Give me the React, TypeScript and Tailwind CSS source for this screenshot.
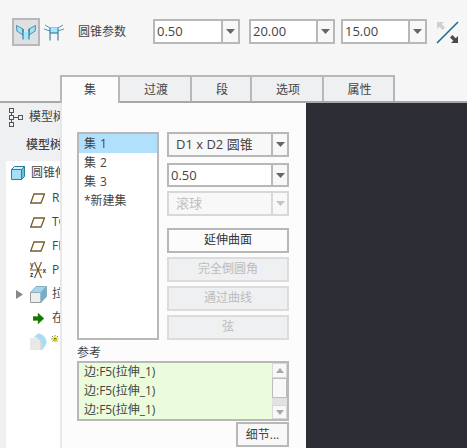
const font = { fontFamily: '"Open Sans","Noto Sans CJK SC",sans-serif' };

function Arrow({ disabled }: { disabled?: boolean }) {
  return (
    <svg width="9" height="5" viewBox="0 0 9 5">
      <path d="M0 0H9L4.5 5Z" fill={disabled ? "#c4c4c4" : "#666666"} />
    </svg>
  );
}

function Combo({ value, w, h = 25, white = true, disabled, center, box = 17 }: { value: string; w: number | string; h?: number; white?: boolean; disabled?: boolean; center?: boolean; box?: number }) {
  return (
    <div
      style={{ width: w, height: h }}
      className={`flex border-2 ${disabled ? "border-[#d8d8d8] bg-[#f8f8f8] text-[#c0c0c0]" : "border-[#b8b8b8] text-[#444444]"} ${white ? "bg-white" : disabled ? "" : "bg-[#f8f8f8]"}`}
    >
      <div className={`flex-1 flex items-center text-[13px] leading-none whitespace-nowrap ${center ? "pl-[7px]" : "pl-[2px]"}`}>{value}</div>
      <div style={{ width: box }} className={`flex items-center justify-center border-l-2 bg-[#f8f8f8] ${disabled ? "border-[#d8d8d8]" : "border-[#b8b8b8]"}`}>
        <Arrow disabled={disabled} />
      </div>
    </div>
  );
}

function ToggleA() {
  return (
    <svg width="20" height="16" viewBox="0 0 20 16">
      <path d="M0.5 1.5L7 5V11L0.8 7Z" fill="#a5e0f5" stroke="#2a7f9f" strokeWidth="0.8" />
      <path d="M19.5 1.5L13 5V11L19.2 7Z" fill="#a5e0f5" stroke="#2a7f9f" strokeWidth="0.8" />
      <path d="M7 8H13V15.5H7Z" fill="#a8e4fb" />
      <path d="M7 5V15.5M13 5V15.5" stroke="#1d6f8f" strokeWidth="1" fill="none" />
    </svg>
  );
}

function ToggleB() {
  return (
    <svg width="20" height="17" viewBox="0 0 20 17">
      <path d="M1 1L6 4H14L19 1M0 5L6 7M20 5L14 7" stroke="#2a7f9f" strokeWidth="0.8" fill="none" />
      <path d="M6.5 4H13.5V9H6.5Z" fill="#a8e4fb" />
      <path d="M6 4V16.5M14 4V16.5M6 9H14" stroke="#1d6f8f" strokeWidth="1" fill="none" />
    </svg>
  );
}

function SwapIcon() {
  return (
    <svg width="23" height="23" viewBox="0 0 23 23">
      <path d="M1 22L22 1" stroke="#1d6b8c" strokeWidth="1.6" />
      <path d="M1 1H8L5.7 3.3L9 6.6L6.6 9L3.3 5.7L1 8Z" fill="#cfcfcf" />
      <path d="M22 22H15L17.3 19.7L14 16.4L16.4 14L19.7 17.3L22 15Z" fill="#4a4a4a" />
    </svg>
  );
}

function TreeHeadIcon() {
  return (
    <svg className="shrink-0" width="14" height="19" viewBox="0 0 14 19" fill="none" stroke="#555" strokeWidth="1">
      <rect x="0.5" y="0.5" width="4" height="4" />
      <rect x="0.5" y="7.5" width="4" height="4" />
      <rect x="0.5" y="14.5" width="4" height="4" />
      <rect x="9.5" y="7.5" width="4" height="4" />
      <path d="M2.5 4.5V7.5M2.5 11.5V14.5M4.5 9.5H9.5" />
    </svg>
  );
}

function CubeIcon() {
  return (
    <svg width="14" height="14" viewBox="0 0 14 14">
      <path d="M0.5 3.5H10.5V13.5H0.5Z" fill="#a5def5" stroke="#2c7fa0" />
      <path d="M0.5 3.5L3.5 0.5H13.5L10.5 3.5Z" fill="#d6f0fa" stroke="#2c7fa0" />
      <path d="M10.5 3.5L13.5 0.5V10.5L10.5 13.5Z" fill="#6fbcd9" stroke="#2c7fa0" />
    </svg>
  );
}

function PlaneIcon() {
  return (
    <svg width="15" height="11" viewBox="0 0 15 11">
      <path d="M4 1H14.5L11 10H0.7Z" fill="none" stroke="#7a5a28" strokeWidth="1.3" />
    </svg>
  );
}

function CsysIcon() {
  return (
    <svg width="17" height="18" viewBox="0 0 17 18">
      <path d="M4.5 1L11.5 17M11.5 1L4.5 17M0 9H12" stroke="#7a5a28" strokeWidth="1.2" fill="none" />
      <text x="0" y="6" fontSize="6.5" fontWeight="700" fill="#333" fontFamily="Liberation Sans">y</text>
      <text x="0" y="16" fontSize="6.5" fontWeight="700" fill="#333" fontFamily="Liberation Sans">z</text>
      <text x="12.5" y="11.5" fontSize="6.5" fontWeight="700" fill="#333" fontFamily="Liberation Sans">x</text>
    </svg>
  );
}

function ExtrudeIcon() {
  return (
    <svg width="17" height="17" viewBox="0 0 17 17">
      <path d="M0.5 6.5H11V16.5H0.5Z" fill="#eeeeee" stroke="#9a9a9a" />
      <path d="M0.5 6.5L6 0.5H16.5L11 6.5Z" fill="#a5d5ea" stroke="#8ab0c0" />
      <path d="M11 6.5L16.5 0.5V10.5L11 16.5Z" fill="#6fb0cf" stroke="#8ab0c0" />
    </svg>
  );
}

function InsertIcon() {
  return (
    <svg className="ml-[3px]" width="11" height="11" viewBox="0 0 11 11">
      <path d="M0 3.5H5V0L11 5.5L5 11V7.5H0Z" fill="#0b7a0b" stroke="#6a8f00" strokeWidth="0.5" />
    </svg>
  );
}

function RoundIcon() {
  return (
    <svg width="17" height="18" viewBox="0 0 17 18">
      <path d="M0 5H10V17H0Z" fill="#e8e8e8" />
      <path d="M8 0.5C12 0.5 16 4 16.5 9C16.5 11 14 15 12 17C12 10 10 5 4 4Z" fill="#a8dcf2" stroke="#cfe8f3" strokeWidth="0.5" />
      <path d="M10 5C11.5 8 12 12 12 17H10Z" fill="#d8d8d8" />
    </svg>
  );
}

function StarIcon() {
  return (
    <svg className="-mt-[7px] -ml-[1px] shrink-0" width="8" height="8" viewBox="0 0 8 8">
      <rect x="1.5" y="1.5" width="5" height="5" fill="#ffff33" />
      <path d="M4 0V8M0 4H8M1 1L7 7M7 1L1 7" stroke="#333" strokeWidth="0.6" strokeDasharray="1.4 1.2" />
    </svg>
  );
}

function Tab({ label, w, active }: { label: string; w: number; active?: boolean }) {
  return (
    <div
      style={{ width: w }}
      className={`h-[27px] flex items-center justify-center text-[12px] border-t-2 border-r-2 border-[#b8b8b8] text-[#444444] ${active ? "bg-[#fcfcfc] border-l-2 -mb-[2px] h-[28px] relative" : "bg-[#eef0f2] pl-[2px]"}`}
    >
      {label}
    </div>
  );
}

function ActionButton({ label, active }: { label: string; active?: boolean }) {
  return (
    <div
      className={`h-[25px] flex items-center justify-center text-[12px] border-2 ${active ? "bg-[#fcfcfc] border-[#b8b8b8] text-[#333333]" : "bg-[#eef0f2] border-[#dcdcdc] text-[#bcbcbc]"}`}
    >
      {label}
    </div>
  );
}

function TreeRow({ icon, label, indent, arrow, iconW = 22 }: { icon: React.ReactNode; label: React.ReactNode; indent: number; arrow?: boolean; iconW?: number }) {
  return (
    <div className="h-[24px] flex items-center relative whitespace-nowrap text-[12px] text-[#444444]" style={{ paddingLeft: indent }}>
      {arrow && (
        <svg className="absolute left-[10px] top-[8px]" width="7" height="9" viewBox="0 0 7 9">
          <path d="M0 0L7 4.5L0 9Z" fill="#888888" />
        </svg>
      )}
      <div style={{ width: iconW }} className="shrink-0 flex items-center">{icon}</div>
      {label}
    </div>
  );
}

export default function App() {
  return (
    <div style={font} className="w-[467px] h-[448px] overflow-hidden flex flex-col bg-[#f6f6f6]">
      <div className="h-[101px] shrink-0 flex flex-col">
        <div className="h-[75px] flex items-start pt-[19px] pl-[12px]">
          <div className="w-[28px] h-[28px] -mt-[1px] flex items-center justify-center bg-[#dfe0e2] border-2 border-[#b8b8b8]">
            <ToggleA />
          </div>
          <div className="ml-[4px] w-[20px] h-[26px] flex items-center"><ToggleB /></div>
          <div className="ml-[14px] w-[75px] h-[25px] flex items-center text-[12px] text-[#444444]">圆锥参数</div>
          <Combo value="0.50" w={87} />
          <div className="w-[9px]" />
          <Combo value="20.00" w={86} />
          <div className="w-[6px]" />
          <Combo value="15.00" w={86} />
          <div className="ml-[9px] mt-[2px]"><SwapIcon /></div>
        </div>
        <div className="h-[26px] flex pl-[60px]">
          <Tab label="集" w={60} active />
          <Tab label="过渡" w={72} />
          <Tab label="段" w={60} />
          <Tab label="选项" w={72} />
          <Tab label="属性" w={71} />
        </div>
      </div>
      <div className="flex-1 flex min-h-0 border-t-2 border-[#a8a8a8]">
        <div className="w-[60px] shrink-0 overflow-hidden bg-[#eef0f2] flex flex-col">
          <div className="h-[28px] flex items-center pl-[9px] gap-[6px] whitespace-nowrap text-[12px] text-[#444444]">
            <TreeHeadIcon />
            <span>模型树</span>
          </div>
          <div className="h-[28px] mb-[2px] flex items-center pl-[26px] whitespace-nowrap text-[12px] font-medium text-[#444444]">模型树</div>
          <div className="flex-1 ml-[6px] bg-white">
            <TreeRow indent={5} iconW={20} icon={<CubeIcon />} label={<span>圆锥伸出项</span>} />
            <div className="h-[1px]" />
            <TreeRow indent={24} icon={<PlaneIcon />} label={<span>RIGHT</span>} />
            <TreeRow indent={24} icon={<PlaneIcon />} label={<span>TOP</span>} />
            <TreeRow indent={24} icon={<PlaneIcon />} label={<span>FRONT</span>} />
            <TreeRow indent={24} icon={<CsysIcon />} label={<span>PRT_CSYS</span>} />
            <TreeRow indent={24} arrow icon={<ExtrudeIcon />} label={<span>拉伸 1</span>} />
            <TreeRow indent={24} icon={<InsertIcon />} label={<span>在此插入</span>} />
            <TreeRow indent={24} icon={<RoundIcon />} label={<StarIcon />} />
          </div>
        </div>
        <div className="w-[246px] shrink-0 bg-[#fcfcfc] border-l-2 border-[#e8e8e8] pl-[15px] pr-[17px] pt-[29px] text-[#444444]">
          <div className="flex gap-[8px] h-[208px]">
            <div className="w-[82px] border-2 border-[#b8b8b8] bg-white text-[12px] tracking-[0.4px]">
              <div className="h-[19px] flex items-center pl-[5px] bg-[#b0e0fc]">集 1</div>
              <div className="h-[19px] flex items-center pl-[5px]">集 2</div>
              <div className="h-[19px] flex items-center pl-[5px]">集 3</div>
              <div className="h-[19px] flex items-center pl-[5px] tracking-normal">*新建集</div>
            </div>
            <div className="w-[122px] flex flex-col">
              <Combo value="D1 x D2 圆锥" w="100%" white={false} center box={16} />
              <div className="h-[6px]" />
              <Combo value="0.50" w="100%" box={16} />
              <div className="h-[4px]" />
              <Combo value="滚球" w="100%" disabled white={false} center box={16} />
              <div className="h-[12px]" />
              <div className="flex flex-col gap-[4px]">
                <ActionButton label="延伸曲面" active />
                <ActionButton label="完全倒圆角" />
                <ActionButton label="通过曲线" />
                <ActionButton label="弦" />
              </div>
            </div>
          </div>
          <div className="h-[21px] flex items-end text-[12px] leading-[16px]">参考</div>
          <div className="w-[212px] h-[60px] border-2 border-[#b8b8b8] bg-[#eafcdc] flex text-[12px]">
            <div className="flex-1 pl-[5px] flex flex-col">
              <div className="h-[19px] flex items-center whitespace-nowrap">边:F5(拉伸_1)</div>
              <div className="h-[19px] flex items-center whitespace-nowrap">边:F5(拉伸_1)</div>
              <div className="h-[19px] flex items-center whitespace-nowrap">边:F5(拉伸_1)</div>
            </div>
            <div className="w-[15px] flex flex-col bg-[#e2e2e2]">
              <div className="h-[15px] flex items-center justify-center bg-[#f8f8f8] border border-[#d8d8d8]">
                <svg width="8" height="5" viewBox="0 0 8 5"><path d="M0 5H8L4 0Z" fill="#a8a8a8" /></svg>
              </div>
              <div className="h-[20px] bg-[#f8f8f8] border border-[#bcbcbc]" />
              <div className="flex-1" />
              <div className="h-[14px] flex items-center justify-center bg-[#f8f8f8] border border-[#d8d8d8]">
                <svg width="8" height="5" viewBox="0 0 8 5"><path d="M0 0H8L4 5Z" fill="#a8a8a8" /></svg>
              </div>
            </div>
          </div>
          <div className="flex justify-end mt-[1px]">
            <div className="w-[53px] h-[25px] flex items-center justify-center border-2 border-[#b8b8b8] bg-[#f8f8f8] text-[12px]">细节...</div>
          </div>
        </div>
        <div className="flex-1 bg-[#2d2d35]" />
      </div>
    </div>
  );
}
